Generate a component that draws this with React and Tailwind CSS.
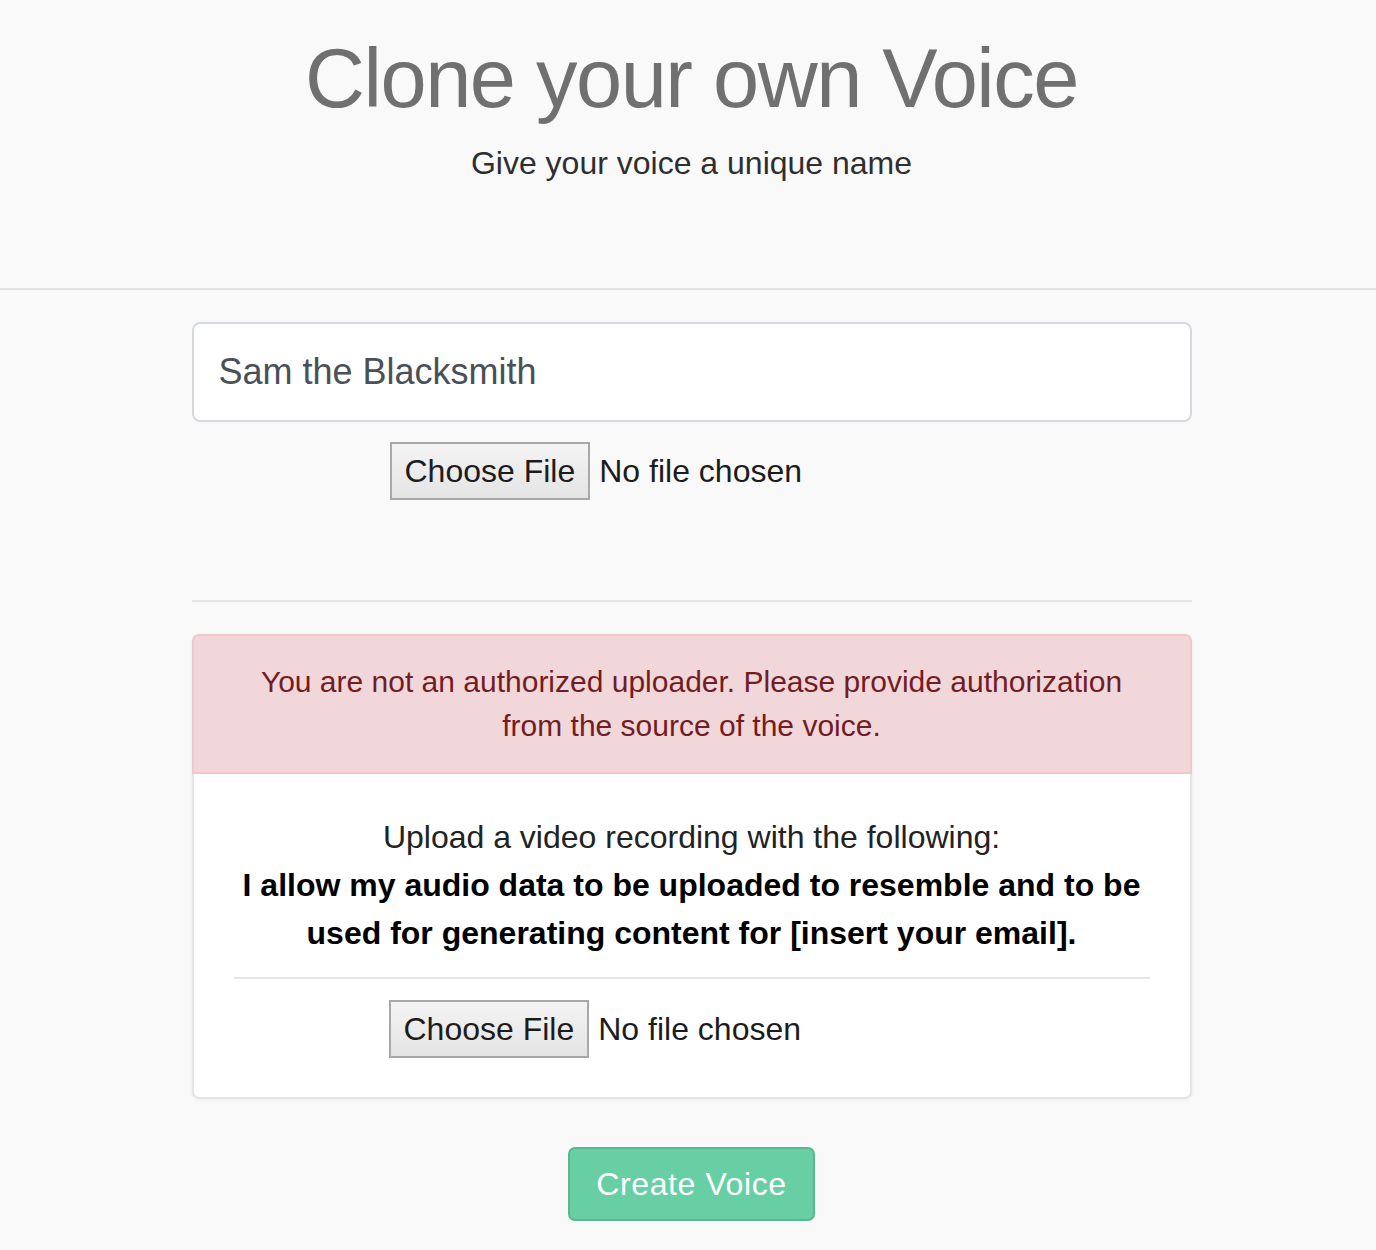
import React from 'react';

const font = { fontFamily: '"Liberation Sans", Arial, sans-serif' };

function FilePicker({ className = '' }) {
  return (
    <div className={`flex items-center ${className}`}>
      <span className="h-[58px] px-[13px] flex items-center border-2 border-[#a8a8a8] bg-gradient-to-b from-[#f4f4f4] to-[#e4e4e4] text-[32px] text-[#1c1c1c] leading-none">
        Choose File
      </span>
      <span className="ml-[9px] text-[32px] text-[#1c1c1c] leading-none">No file chosen</span>
    </div>
  );
}

export default function App() {
  return (
    <div className="min-h-[1250px] bg-[#f9f9f9]" style={font}>
      {/* Header */}
      <header className="h-[290px] border-b-2 border-[#e2e2e2] pt-[37px] pl-[7px] text-center">
        <h1 className="text-[83px] leading-none tracking-[-1.5px] text-[#707070]">Clone your own Voice</h1>
        <p className="mt-[27px] text-[32px] leading-none text-[#2f2f2f]">Give your voice a unique name</p>
      </header>

      <div className="pl-[7px]">
        <main className="w-[1000px] mx-auto">
          {/* Name input */}
          <div className="mt-[32px] h-[100px] rounded-[8px] border-2 border-[#d5d9dd] bg-white flex items-center px-[25px]">
            <span className="text-[36px] text-[#495057] leading-none">Sam the Blacksmith</span>
          </div>

          <FilePicker className="mt-[20px] pl-[198px]" />

          <div className="mt-[100px] h-[2px] bg-[#e3e3e3]" />

          {/* Authorization card */}
          <div className="mt-[32px] rounded-[7px] border-2 border-[#e6e6e6] bg-white shadow-[0_1px_3px_rgba(0,0,0,0.06)]">
            <div className="-mx-[2px] -mt-[2px] rounded-t-[7px] border-2 border-[#efc8cc] bg-[#f2d7da] py-[24px] px-[40px] text-center text-[30px] leading-[44px] text-[#721c24]">
              You are not an authorized uploader. Please provide authorization<br />
              from the source of the voice.
            </div>
            <div className="px-[40px] pt-[39px] pb-[39px]">
              <p className="text-center text-[32px] leading-[48px] text-[#222]">Upload a video recording with the following:</p>
              <p className="text-center text-[32px] leading-[48px] font-bold text-black">
                I allow my audio data to be uploaded to resemble and to be<br />
                used for generating content for [insert your email].
              </p>
              <div className="mt-[20px] h-[2px] bg-[#e5e5e5]" />
              <FilePicker className="mt-[21px] pl-[155px]" />
            </div>
          </div>

          <div className="mt-[48px] flex justify-center">
            <button className="h-[74px] px-[26px] rounded-[7px] border-2 border-[#5cb68f] bg-[#68cfa5] text-white text-[32px] tracking-[0.6px] leading-none">
              Create Voice
            </button>
          </div>
        </main>
      </div>
    </div>
  );
}
